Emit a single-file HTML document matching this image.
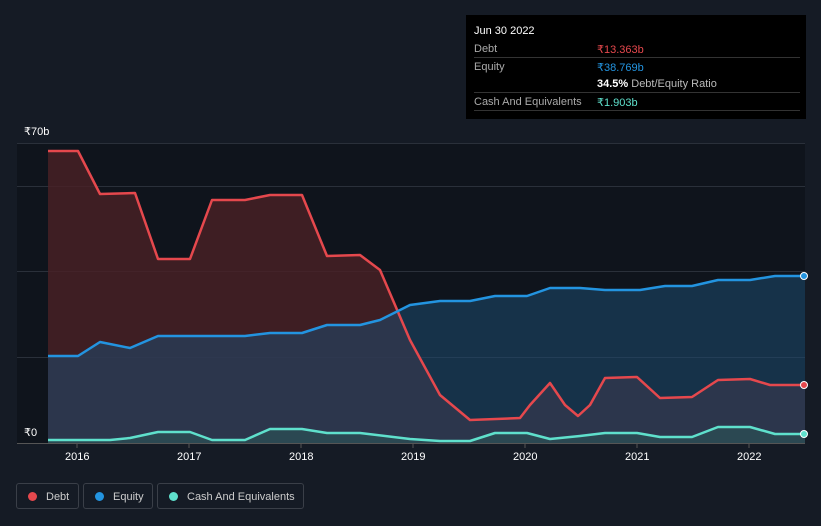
<!DOCTYPE html><html><head><style>
body{margin:0;width:821px;height:526px;background:#151b25;font-family:"Liberation Sans",sans-serif;overflow:hidden;position:relative}
.tt{position:absolute;left:466px;top:15px;width:340px;height:104px;background:#000;color:#fff;font-size:11px}
.tt .r{position:absolute;left:8px;width:326px;height:17px;border-bottom:1px solid #333;}
.tt .l{position:absolute;left:0;top:3px;color:#aaa}
.tt .v{position:absolute;left:123px;top:3px;font-weight:bold}
.ax{position:absolute;color:#fff;font-size:11px}
.lg{position:absolute;top:483px;height:26px;border:1px solid #3a3f48;border-radius:3px;color:#ccc;font-size:11px;line-height:26px;box-sizing:border-box}
.lg i{display:inline-block;width:9px;height:9px;border-radius:50%;margin:0 9px 0 11px;vertical-align:-1px}
</style></head><body>
<svg width="821" height="526" style="position:absolute;left:0;top:0">
<rect x="17" y="143" width="788" height="300" fill="#0f141c"/>
<g stroke="#2a303a" stroke-width="1">
<line x1="17" y1="143.5" x2="805" y2="143.5"/><line x1="17" y1="186.5" x2="805" y2="186.5"/><line x1="17" y1="271.5" x2="805" y2="271.5"/><line x1="17" y1="357.5" x2="805" y2="357.5"/></g>
<line x1="17" y1="443.5" x2="805" y2="443.5" stroke="#555"/>
<polygon fill="#4a2026" fill-opacity="0.8" points="48,443 48,151 78,151 100,194 135,193 158,259 190,259 212,200 245,200 270,195 302,195 327,256 360,255 380,270 410,340 440,395 470,420 520,418 530,405 550,383 565,405 578,416 590,405 605,378 637,377 660,398 692,397 718,380 750,379 770,385 805,385 805,443"/>
<polygon fill="#1e4a70" fill-opacity="0.55" points="48,443 48,356 78,356 100,342 130,348 158,336 190,336 245,336 270,333 302,333 327,325 360,325 380,320 410,305 440,301 470,301 495,296 527,296 550,288 580,288 605,290 640,290 665,286 692,286 718,280 750,280 775,276 805,276 805,443"/>
<polygon fill="#2a5a58" fill-opacity="0.5" points="48,443 48,440 110,440 130,438 158,432 190,432 212,440 245,440 270,429 302,429 327,433 360,433 410,439 440,441 470,441 495,433 527,433 550,439 580,436 605,433 637,433 660,437 692,437 718,427 750,427 775,434 805,434 805,443"/>
<g fill="none" stroke-width="2.5" stroke-linejoin="round">
<polyline stroke="#e5484d" points="48,151 78,151 100,194 135,193 158,259 190,259 212,200 245,200 270,195 302,195 327,256 360,255 380,270 410,340 440,395 470,420 520,418 530,405 550,383 565,405 578,416 590,405 605,378 637,377 660,398 692,397 718,380 750,379 770,385 805,385"/>
<polyline stroke="#2394e0" points="48,356 78,356 100,342 130,348 158,336 190,336 245,336 270,333 302,333 327,325 360,325 380,320 410,305 440,301 470,301 495,296 527,296 550,288 580,288 605,290 640,290 665,286 692,286 718,280 750,280 775,276 805,276"/>
<polyline stroke="#5fe0cc" points="48,440 110,440 130,438 158,432 190,432 212,440 245,440 270,429 302,429 327,433 360,433 410,439 440,441 470,441 495,433 527,433 550,439 580,436 605,433 637,433 660,437 692,437 718,427 750,427 775,434 805,434"/>
</g>
<circle cx="804" cy="385" r="3.5" fill="#e5484d" stroke="#fff" stroke-width="1"/>
<circle cx="804" cy="276" r="3.5" fill="#2394e0" stroke="#fff" stroke-width="1"/>
<circle cx="804" cy="434" r="3.5" fill="#5fe0cc" stroke="#fff" stroke-width="1"/>
<g stroke="#555"><line x1="77" y1="443" x2="77" y2="448"/><line x1="189" y1="443" x2="189" y2="448"/><line x1="301" y1="443" x2="301" y2="448"/><line x1="413" y1="443" x2="413" y2="448"/><line x1="525" y1="443" x2="525" y2="448"/><line x1="637" y1="443" x2="637" y2="448"/><line x1="749" y1="443" x2="749" y2="448"/></g>
</svg>
<div class="ax" style="left:24px;top:125px">₹70b</div>
<div class="ax" style="left:24px;top:426px">₹0</div>
<div class="ax" style="left:65px;top:451px">2016</div>
<div class="ax" style="left:177px;top:451px">2017</div>
<div class="ax" style="left:289px;top:451px">2018</div>
<div class="ax" style="left:401px;top:451px">2019</div>
<div class="ax" style="left:513px;top:451px">2020</div>
<div class="ax" style="left:625px;top:451px">2021</div>
<div class="ax" style="left:737px;top:451px">2022</div>
<div class="tt">
<div style="position:absolute;left:8px;top:10px">Jun 30 2022</div>
<div class="r" style="top:25px"><span class="l">Debt</span><span class="v" style="color:#e5484d;font-weight:normal">₹13.363b</span></div>
<div class="r" style="top:43px;border:none"><span class="l">Equity</span><span class="v" style="color:#2394e0;font-weight:normal">₹38.769b</span></div>
<div class="r" style="top:60px"><span class="v" style="font-weight:bold">34.5% <span style="font-weight:normal;color:#bbb">Debt/Equity Ratio</span></span></div>
<div class="r" style="top:78px"><span class="l">Cash And Equivalents</span><span class="v" style="color:#5fe0cc;font-weight:normal">₹1.903b</span></div>
</div>
<div class="lg" style="left:16px;width:63px"><i style="background:#e5484d"></i>Debt</div>
<div class="lg" style="left:83px;width:70px"><i style="background:#2394e0"></i>Equity</div>
<div class="lg" style="left:157px;width:147px"><i style="background:#5fe0cc"></i>Cash And Equivalents</div>
</body></html>
